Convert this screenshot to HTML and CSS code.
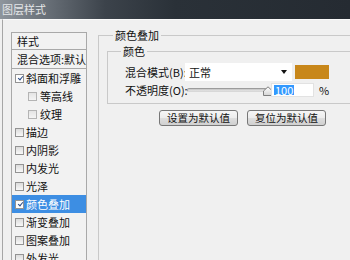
FILE: index.html
```html
<!DOCTYPE html>
<html>
<head>
<meta charset="utf-8">
<link rel="stylesheet" href="styles.css">
</head>
<body>
<div class="title">图层样式</div>
<div class="win">
  <div class="side">
    <div class="list">
      <div class="head">样式</div>
      <div class="head h2">混合选项:默认</div>
      <div class="item"><span class="cb on"></span>斜面和浮雕</div>
      <div class="item sub"><span class="cb"></span>等高线</div>
      <div class="item sub"><span class="cb"></span>纹理</div>
      <div class="item"><span class="cb"></span>描边</div>
      <div class="item"><span class="cb"></span>内阴影</div>
      <div class="item"><span class="cb"></span>内发光</div>
      <div class="item"><span class="cb"></span>光泽</div>
      <div class="item sel"><span class="cb on"></span>颜色叠加</div>
      <div class="item"><span class="cb"></span>渐变叠加</div>
      <div class="item"><span class="cb"></span>图案叠加</div>
      <div class="item"><span class="cb"></span>外发光</div>
    </div>
  </div>
  <div class="main">
    <fieldset class="outer">
      <legend>颜色叠加</legend>
      <fieldset class="inner">
        <legend>颜色</legend>
        <div class="row r1">
          <span class="lbl">混合模式(B):</span>
          <div class="select"><span class="val">正常</span><span class="arrow"></span></div>
          <span class="swatch"></span>
        </div>
        <div class="row r2">
          <span class="lbl">不透明度(O):</span>
          <div class="slider">
            <span class="track"></span>
            <svg class="thumb" width="10" height="10" viewBox="0 0 10 10">
              <defs><linearGradient id="tg" x1="0" y1="0" x2="0" y2="1"><stop offset="0" stop-color="#ffffff"/><stop offset="1" stop-color="#d4d4d4"/></linearGradient></defs>
              <path d="M0.5 9.5 V5 L5 0.8 L9.5 5 V9.5 Z" fill="url(#tg)" stroke="#7f7f7f"/>
            </svg>
          </div>
          <div class="input"><span class="hl">100</span></div>
          <span class="pct">%</span>
        </div>
      </fieldset>
      <div class="btns">
        <button class="btn">设置为默认值</button>
        <button class="btn">复位为默认值</button>
      </div>
    </fieldset>
  </div>
</div>
</body>
</html>
```

FILE: styles.css
```css
html, body {
  margin: 0;
  padding: 0;
}
body {
  width: 350px;
  height: 260px;
  overflow: hidden;
  background: #f0f0f0;
  font-family: "Noto Sans CJK SC", "Liberation Sans", sans-serif;
  font-size: 11px;
  color: #111;
}
.title {
  height: 19px;
  line-height: 18px;
  padding-left: 2px;
  color: #e4e6e8;
  background: linear-gradient(to right, #8e959c 0%, #6c737b 12%, #3c434b 30%, #2a3138 50%, #252b32 100%);
  box-sizing: border-box;
}
.win {
  display: flex;
  height: 241px;
  margin-left: 2px;
  border-left: 1px solid #a6a6a6;
  border-top: 1px solid #fafafa;
  box-sizing: border-box;
}
.side {
  padding: 12px 0 0 8px;
}
.list {
  width: 76px;
  height: 240px;
  border: 1px solid #a9a9a9;
  border-bottom: none;
  box-sizing: border-box;
  background: #f2f2f2;
  overflow: hidden;
}
.head {
  height: 16px;
  line-height: 16px;
  padding-left: 5px;
  border-bottom: 1px solid #a9a9a9;
  white-space: nowrap;
}
.head.h2 {
  height: 18px;
  line-height: 18px;
}
.item {
  height: 18px;
  display: flex;
  align-items: center;
  padding-left: 3px;
  white-space: nowrap;
}
.item.sub {
  padding-left: 16px;
}
.item.sel {
  background: #3d8ee3;
  color: #fff;
}
.cb {
  width: 9px;
  height: 9px;
  box-sizing: border-box;
  border: 1px solid #939393;
  background: linear-gradient(#dcdcdc, #f8f8f8);
  margin-right: 2px;
  position: relative;
  flex: none;
}
.item.sub .cb {
  border-color: #b4b4b4;
  background: linear-gradient(#e4e4e4, #f4f4f4);
  margin-right: 3px;
}
.cb.on {
  background: #fdfdfd;
}
.cb.on::after {
  content: "";
  position: absolute;
  left: 1px;
  top: 0px;
  width: 2px;
  height: 4px;
  border: solid #2a4a86;
  border-width: 0 1.5px 1.5px 0;
  transform: rotate(40deg);
  left: 2.5px;
}
.main {
  flex: 1;
  min-width: 0;
  padding-left: 11px;
}
fieldset {
  margin: 0;
  padding: 0;
  border: 1px solid #c9c9c9;
  min-inline-size: 0;
}
legend {
  padding: 0 2px;
  line-height: 16px;
  height: 16px;
}
.outer {
  margin-top: 7px;
  width: 290px;
  height: 260px;
  box-sizing: border-box;
}
.outer > legend {
  margin-left: 14px;
}
.inner {
  margin-left: 8px;
  width: 290px;
  padding: 4px 0 5px 17px;
  box-sizing: border-box;
}
.inner > legend {
  margin-left: -4px;
}
.row {
  display: flex;
  align-items: center;
}
.r1 {
  height: 18px;
}
.r2 {
  height: 16px;
  margin-top: 1px;
}
.lbl {
  width: 60px;
  white-space: nowrap;
  flex: none;
}
.select {
  width: 107px;
  height: 18px;
  background: #fff;
  display: flex;
  align-items: center;
  justify-content: space-between;
  padding: 0 5px 0 4px;
  box-sizing: border-box;
}
.arrow {
  width: 0;
  height: 0;
  border-left: 3px solid transparent;
  border-right: 3px solid transparent;
  border-top: 4px solid #111;
}
.swatch {
  width: 34px;
  height: 14px;
  margin-left: 3px;
  background: #c8871a;
}
.slider {
  width: 88px;
  display: flex;
  align-items: center;
  flex: none;
}
.track {
  width: 80px;
  height: 4px;
  margin-left: 2px;
  box-sizing: border-box;
  border: 1px solid #9c9c9c;
  border-bottom-color: #d8d8d8;
  background: linear-gradient(#c4c4c4, #e6e6e6);
  border-radius: 2px;
}
.thumb {
  margin-left: -4px;
  margin-top: 1px;
  display: block;
}
.input {
  width: 43px;
  height: 14px;
  background: #fff;
  border: 1px solid #e2e2e2;
  box-sizing: border-box;
  display: flex;
  align-items: center;
  padding-left: 2px;
  margin-left: -2px;
}
.hl {
  background: #3399ff;
  color: #fff;
  line-height: 10px;
  height: 10px;
  font-size: 11px;
  padding: 0 1px;
}
.pct {
  margin-left: 5px;
}
.btns {
  display: flex;
  gap: 9px;
  padding-left: 60px;
  margin-top: 6px;
}
.btn {
  width: 79px;
  height: 16px;
  padding: 0;
  font-family: inherit;
  font-size: 10.5px;
  line-height: 14px;
  color: #111;
  border: 1px solid #777;
  border-radius: 3px;
  background: linear-gradient(#f6f6f6, #ececec 50%, #dedede 51%, #d0d0d0);
}
```
